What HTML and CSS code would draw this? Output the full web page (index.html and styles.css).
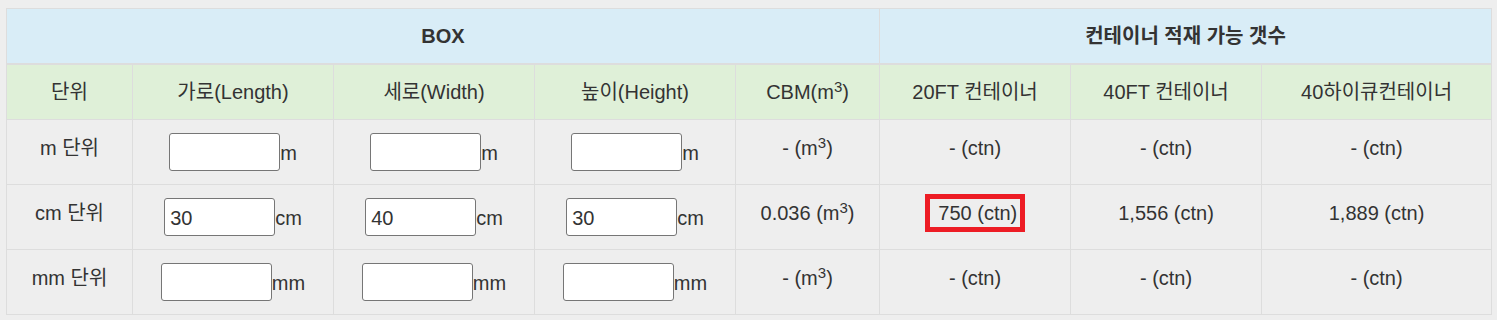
FILE: index.html
```html
<!DOCTYPE html>
<html lang="ko">
<head>
<meta charset="utf-8">
<title>CBM 계산기</title>
<link rel="stylesheet" href="styles.css">
</head>
<body>
<div class="wrap">
<table class="calc">
  <colgroup>
    <col class="c-unit">
    <col class="c-dim">
    <col class="c-dim">
    <col class="c-dim">
    <col class="c-cbm">
    <col class="c-ctn">
    <col class="c-ctn">
    <col class="c-hq">
  </colgroup>
  <thead>
    <tr class="head-main">
      <th colspan="5">BOX</th>
      <th colspan="3">컨테이너 적재 가능 갯수</th>
    </tr>
    <tr class="head-sub">
      <th>단위</th>
      <th>가로(Length)</th>
      <th>세로(Width)</th>
      <th>높이(Height)</th>
      <th>CBM(m<sup>3</sup>)</th>
      <th>20FT 컨테이너</th>
      <th>40FT 컨테이너</th>
      <th>40하이큐컨테이너</th>
    </tr>
  </thead>
  <tbody>
    <tr>
      <td>m 단위</td>
      <td><input class="dim" type="text">m</td>
      <td><input class="dim" type="text">m</td>
      <td><input class="dim" type="text">m</td>
      <td>- (m<sup>3</sup>)</td>
      <td>- (ctn)</td>
      <td>- (ctn)</td>
      <td>- (ctn)</td>
    </tr>
    <tr>
      <td>cm 단위</td>
      <td><input class="dim" type="text" value="30">cm</td>
      <td><input class="dim" type="text" value="40">cm</td>
      <td><input class="dim" type="text" value="30">cm</td>
      <td>0.036 (m<sup>3</sup>)</td>
      <td><span class="hl">&nbsp;750 (ctn)</span></td>
      <td>1,556 (ctn)</td>
      <td>1,889 (ctn)</td>
    </tr>
    <tr>
      <td>mm 단위</td>
      <td><input class="dim" type="text">mm</td>
      <td><input class="dim" type="text">mm</td>
      <td><input class="dim" type="text">mm</td>
      <td>- (m<sup>3</sup>)</td>
      <td>- (ctn)</td>
      <td>- (ctn)</td>
      <td>- (ctn)</td>
    </tr>
  </tbody>
</table>
</div>
</body>
</html>
```
FILE: styles.css
```css
html, body {
  margin: 0;
  padding: 0;
  background: #eeeeee;
}

body {
  font-family: "Liberation Sans", Arial, "Noto Sans CJK KR", sans-serif;
  font-size: 20px;
  color: #333333;
}

.wrap {
  padding: 8px 6px;
}

.calc {
  width: 1485px;
  table-layout: fixed;
  border-collapse: collapse;
  border: 1px solid #dddddd;
}

.c-unit { width: 126px; }
.c-dim { width: 201px; }
.c-cbm { width: 144px; }
.c-ctn { width: 191px; }
.c-hq { width: 230px; }

.calc th,
.calc td {
  border: 1px solid #dddddd;
  padding: 12px 8px;
  line-height: 30px;
  text-align: center;
  vertical-align: top;
  white-space: nowrap;
}

.calc td {
  padding: 13px 8px;
  background: #eeeeee;
}

.head-main th {
  background: #d9edf7;
  font-weight: bold;
  border-bottom: 2px solid #dddddd;
}

.head-sub th {
  background: #dff0d8;
  font-weight: normal;
}

sup {
  font-size: 15px;
  line-height: 0;
  vertical-align: 7px;
}

.dim {
  box-sizing: border-box;
  width: 111px;
  height: 38px;
  padding: 2px 5px 0;
  margin: 0;
  border: 1px solid #767676;
  border-radius: 3px;
  background: #ffffff;
  font-family: "Liberation Sans", Arial, sans-serif;
  font-size: 20px;
  color: #333333;
  vertical-align: baseline;
}

.hl {
  border: 5px solid #ed1c24;
  padding: 3px 3px;
}
```
